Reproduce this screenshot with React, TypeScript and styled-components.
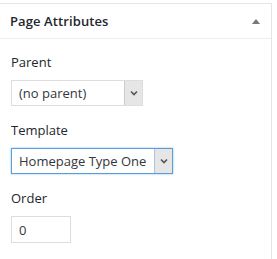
import React from 'react';
import styled, {createGlobalStyle} from 'styled-components';

const GlobalStyle = createGlobalStyle`
  html, body {
    margin: 0;
    padding: 0;
    background: #fff;
  }
  body {
    font-family: "Open Sans", "Noto Sans", sans-serif;
    color: #23282d;
  }
`

const Panel = styled.div`
  margin-top: 3px;
  width: 272px;
  border-top: 1px solid #e5e5e5;
  border-right: 1px solid #e5e5e5;
  background: #fff;
  height: 256px;
  box-sizing: border-box;
`

const Header = styled.div`
  display: flex;
  align-items: center;
  justify-content: space-between;
  height: 34px;
  padding: 0 10px;
  border-bottom: 1px solid #eee;
`

const Title = styled.h2`
  margin: 0;
  font-size: 13px;
  font-weight: 600;
  letter-spacing: 0.1px;
`

const Toggle = styled.span`
  width: 0;
  height: 0;
  margin-right: 1px;
  border-left: 4px solid transparent;
  border-right: 4px solid transparent;
  border-bottom: 5px solid #72777c;
`

const Body = styled.div`
  padding: 13px 11px 0;
  display: flex;
  flex-direction: column;
  align-items: flex-start;
`

const Label = styled.label`
  display: block;
  font-size: 13px;
  line-height: 20px;
  margin-bottom: 8px;
`

const Field = styled.div`
  margin-bottom: 14px;
`

const SelectBox = styled.div<{ $focused?: boolean }>`
  display: flex;
  height: 26px;
  box-sizing: border-box;
  border: 1px solid ${props => props.$focused ? '#5b9dd9' : '#ddd'};
  box-shadow: ${props => props.$focused ? '0 0 2px rgba(30, 140, 190, 0.5)' : 'none'};
  background: #fff;
`

const Select = styled.select`
  appearance: none;
  border: none;
  outline: none;
  background: transparent;
  font-family: inherit;
  font-size: 13px;
  color: #32373c;
  padding: 0 7px;
  margin: 0;
`

const ArrowButton = styled.span<{ $focused?: boolean }>`
  display: flex;
  align-items: center;
  justify-content: center;
  width: 17px;
  background: #e6e6e6;
  border-left: 1px solid ${props => props.$focused ? '#a8c6e2' : '#ccc'};
`

const NumberInput = styled.input`
  width: 60px;
  height: 27px;
  box-sizing: border-box;
  border: 1px solid #ddd;
  font-family: inherit;
  font-size: 13px;
  color: #32373c;
  padding: 0 7px;
  outline: none;
`

const Chevron = () => (
    <svg width="8" height="6" viewBox="0 0 8 6">
        <path d="M1 1.5 L4 4.5 L7 1.5" fill="none" stroke="#555" strokeWidth="1.6"/>
    </svg>
)

const App = () => {
    return (
        <>
            <GlobalStyle/>
            <Panel>
                <Header>
                    <Title>Page Attributes</Title>
                    <Toggle/>
                </Header>
                <Body>
                    <Field>
                        <Label>Parent</Label>
                        <SelectBox>
                            <Select style={{width: 112}} defaultValue="">
                                <option value="">(no parent)</option>
                            </Select>
                            <ArrowButton><Chevron/></ArrowButton>
                        </SelectBox>
                    </Field>
                    <Field>
                        <Label>Template</Label>
                        <SelectBox $focused>
                            <Select style={{width: 142}} defaultValue="one">
                                <option value="one">Homepage Type One</option>
                            </Select>
                            <ArrowButton $focused><Chevron/></ArrowButton>
                        </SelectBox>
                    </Field>
                    <Field>
                        <Label>Order</Label>
                        <NumberInput type="text" defaultValue="0"/>
                    </Field>
                </Body>
            </Panel>
        </>
    )
}

export default App
